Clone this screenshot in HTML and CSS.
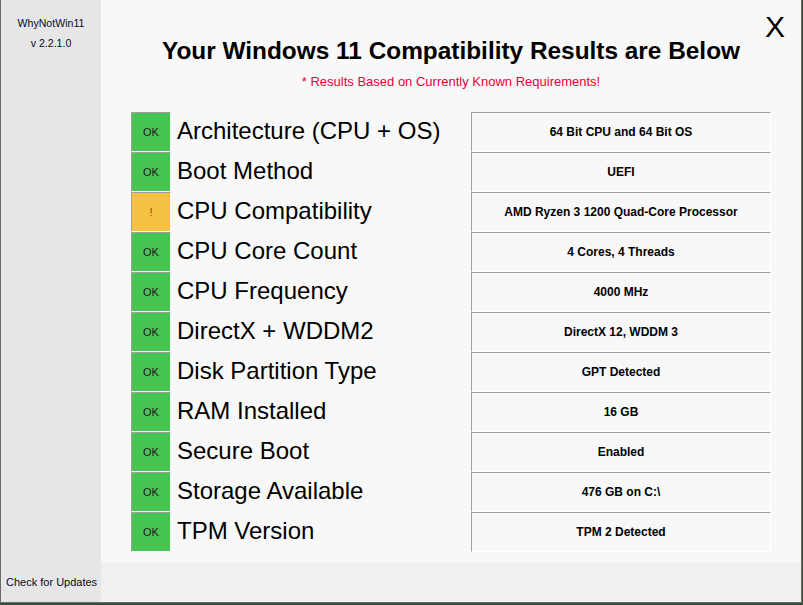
FILE: index.html
```html
<!DOCTYPE html>
<html lang="en">
<head>
<meta charset="utf-8">
<title>WhyNotWin11</title>
<link rel="stylesheet" href="styles.css">
</head>
<body>
<div class="window">
  <aside class="sidebar">
    <div class="brand">
      <div>WhyNotWin11</div>
      <div>v 2.2.1.0</div>
    </div>
    <div class="updates">Check for Updates</div>
  </aside>
  <main class="main">
    <div class="close">X</div>
    <header class="header">
      <h1 class="title">Your Windows 11 Compatibility Results are Below</h1>
      <p class="note">* Results Based on Currently Known Requirements!</p>
    </header>
    <div class="checks">
      <div class="row"><span class="badge ok">OK</span><span class="label">Architecture (CPU + OS)</span><span class="value">64 Bit CPU and 64 Bit OS</span></div>
      <div class="row"><span class="badge ok">OK</span><span class="label">Boot Method</span><span class="value">UEFI</span></div>
      <div class="row"><span class="badge warn">!</span><span class="label">CPU Compatibility</span><span class="value">AMD Ryzen 3 1200 Quad-Core Processor</span></div>
      <div class="row"><span class="badge ok">OK</span><span class="label">CPU Core Count</span><span class="value">4 Cores, 4 Threads</span></div>
      <div class="row"><span class="badge ok">OK</span><span class="label">CPU Frequency</span><span class="value">4000 MHz</span></div>
      <div class="row"><span class="badge ok">OK</span><span class="label">DirectX + WDDM2</span><span class="value">DirectX 12, WDDM 3</span></div>
      <div class="row"><span class="badge ok">OK</span><span class="label">Disk Partition Type</span><span class="value">GPT Detected</span></div>
      <div class="row"><span class="badge ok">OK</span><span class="label">RAM Installed</span><span class="value">16 GB</span></div>
      <div class="row"><span class="badge ok">OK</span><span class="label">Secure Boot</span><span class="value">Enabled</span></div>
      <div class="row"><span class="badge ok">OK</span><span class="label">Storage Available</span><span class="value">476 GB on C:\</span></div>
      <div class="row"><span class="badge ok">OK</span><span class="label">TPM Version</span><span class="value">TPM 2 Detected</span></div>
    </div>
    <footer class="footer"></footer>
  </main>
</div>
</body>
</html>
```

FILE: styles.css
```css
html, body {
  margin: 0;
  padding: 0;
}

body {
  width: 803px;
  height: 605px;
  overflow: hidden;
  background: #34503a;
  font-family: "Liberation Sans", Arial, sans-serif;
  color: #000;
}

.window {
  display: flex;
  width: 800px;
  height: 602px;
  border-left: 1px solid #6b6b6b;
  border-right: 1px solid #6b6b6b;
  border-bottom: 1px solid #6b6b6b;
}

/* left column with the app name and the update link */
.sidebar {
  width: 100px;
  flex: none;
  background: #e6e6e6;
  display: flex;
  flex-direction: column;
  justify-content: space-between;
  font-size: 11px;
}

.brand {
  padding-top: 13px;
  text-align: center;
  line-height: 20px;
  font-size: 10.6px;
  color: #0a0a28;
}

.updates {
  padding: 0 0 13px 5px;
  line-height: 13px;
  color: #0a0a28;
}

.main {
  position: relative;
  width: 700px;
  flex: none;
  background: #f8f8f8;
  display: flex;
  flex-direction: column;
}

.close {
  position: absolute;
  top: 12px;
  right: 16px;
  font-size: 30px;
  line-height: 30px;
}

.header {
  padding-top: 37px;
  height: 75px;
  box-sizing: border-box;
  text-align: center;
}

.title {
  margin: 0;
  font-size: 24.4px;
  line-height: 28px;
  font-weight: bold;
}

.note {
  margin: 9px 0 0;
  font-size: 13px;
  line-height: 16px;
  color: #e8003a;
}

.checks {
  padding: 37px 0 0 30px;
}

.row {
  display: grid;
  grid-template-columns: 40px 300px 300px;
  height: 40px;
}

.badge {
  box-sizing: border-box;
  height: 40px;
  border-top: 1px solid #a0a0a0;
  border-left: 1px solid #a0a0a0;
  border-bottom: 1px solid #ffffff;
  border-right: 1px solid #f8f8f8;
  display: flex;
  align-items: center;
  justify-content: center;
  font-size: 11px;
  color: #1a1a1a;
}

.ok {
  background: #48c455;
}

.warn {
  background: #f5c143;
  color: #9a3c00;
}

.label {
  padding-left: 6px;
  font-size: 24px;
  line-height: 38px;
  white-space: nowrap;
}

.value {
  box-sizing: border-box;
  height: 40px;
  border-top: 1px solid #a0a0a0;
  border-left: 1px solid #a0a0a0;
  border-bottom: 1px solid #ffffff;
  border-right: 1px solid #ffffff;
  text-align: center;
  font-size: 12px;
  font-weight: bold;
  line-height: 38px;
  white-space: nowrap;
}

.footer {
  margin-top: auto;
  height: 40px;
  background: #f0f0f0;
}
```
